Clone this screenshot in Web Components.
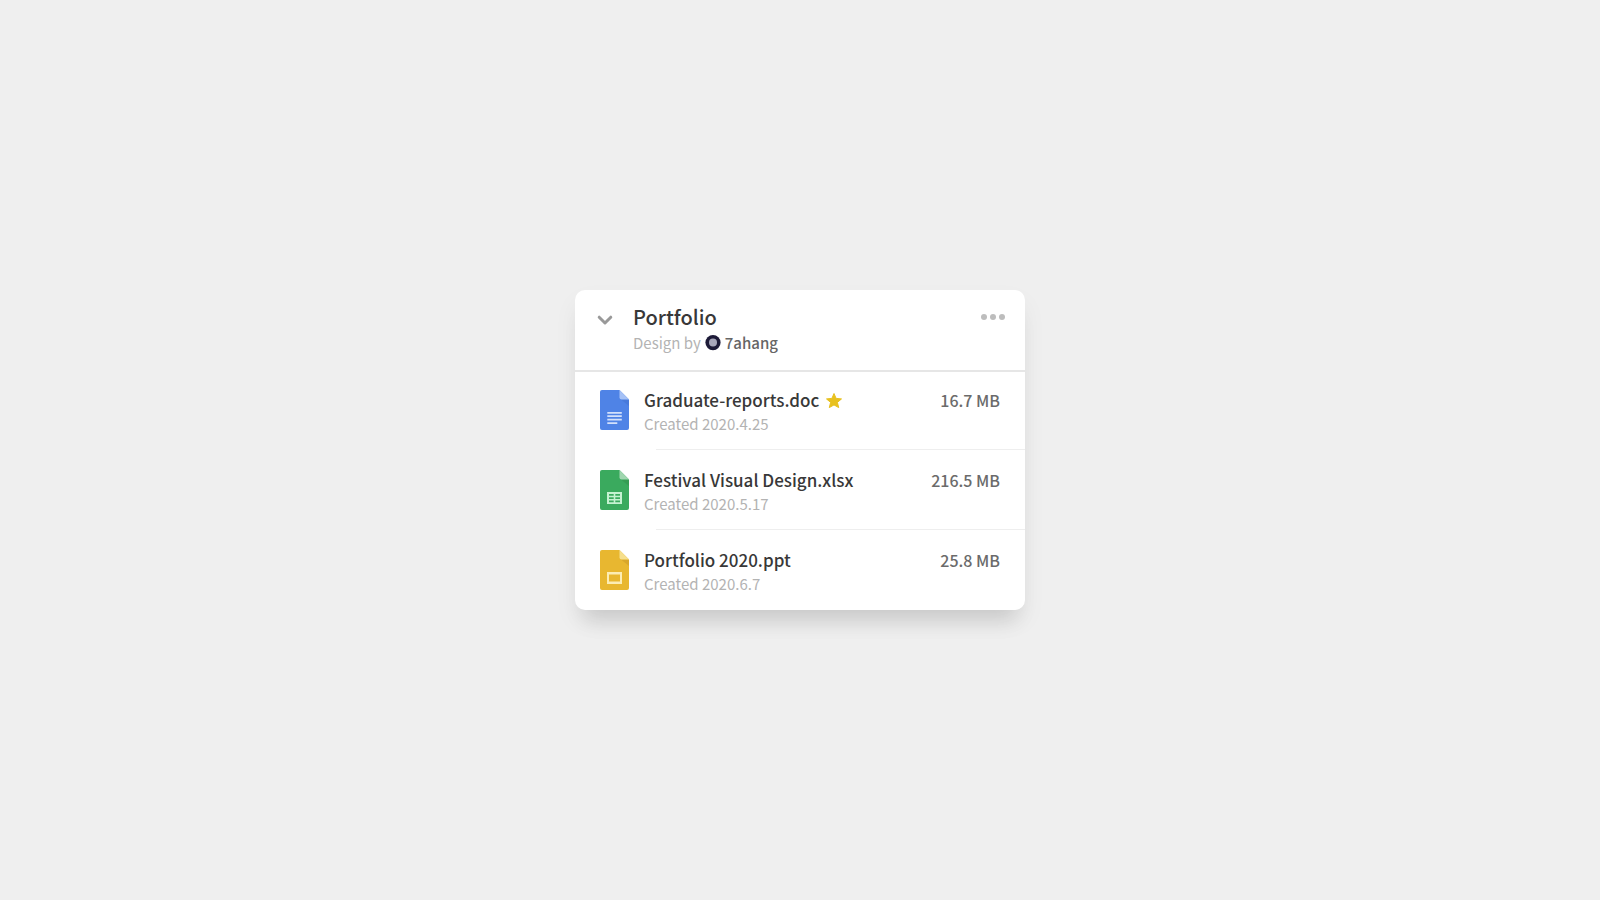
<!DOCTYPE html>
<html lang="en">
<head>
<meta charset="utf-8">
<title>Portfolio</title>
<style>
body {
  margin: 0;
  min-height: 100vh;
  display: grid;
  place-items: center;
  background: #efefef;
  color: #383838;
  font-family: "Noto Sans CJK SC", "Noto Sans", sans-serif;
}
</style>
</head>
<body>
<folder-card>
  <folder-header slot="header" heading="Portfolio" author="7ahang"></folder-header>
  <file-row kind="doc" name="Graduate-reports.doc" created="2020.4.25" size="16.7 MB" starred></file-row>
  <file-row kind="sheet" name="Festival Visual Design.xlsx" created="2020.5.17" size="216.5 MB"></file-row>
  <file-row kind="slides" name="Portfolio 2020.ppt" created="2020.6.7" size="25.8 MB"></file-row>
</folder-card>

<script>
function mount(host, markup) {
  const template = document.createElement('template');
  template.innerHTML = markup;
  host.attachShadow({ mode: 'open' }).append(template.content.cloneNode(true));
}

class FolderCard extends HTMLElement {
  connectedCallback() {
    if (this.shadowRoot) return;
    mount(this, `
      <style>
        :host {
          display: block;
          width: 100%;
          max-width: 450px;
          border-radius: 10px;
          background: #ffffff;
          box-shadow: 0 20px 20px -10px rgba(0, 0, 0, .12), 0 12px 24px rgba(0, 0, 0, .05);
        }
        .files { border-top: 2px solid #e6e6e6; }
      </style>
      <slot name="header"></slot>
      <div class="files"><slot></slot></div>`);
  }
}

class FolderHeader extends HTMLElement {
  connectedCallback() {
    if (this.shadowRoot) return;
    mount(this, `
      <style>
        :host {
          display: flex;
          align-items: flex-start;
          box-sizing: border-box;
          height: 80px;
          padding: 13px 19px 0 20px;
        }
        button {
          display: block;
          padding: 0;
          border: 0;
          background: none;
          cursor: pointer;
        }
        svg { display: block; }
        .toggle { margin: 7px 18px 0 0; }
        .more { margin-top: 5px; }
        .text { flex: 1; }
        h1 {
          margin: 0;
          font-size: 20px;
          line-height: 28px;
          font-weight: 500;
        }
        p {
          display: flex;
          align-items: center;
          gap: 4px;
          margin: 0;
          font-size: 15px;
          line-height: 24px;
          color: #b3b3b3;
        }
        a {
          display: flex;
          align-items: center;
          gap: 4px;
          color: #666666;
          font-weight: 500;
          text-decoration: none;
        }
      </style>
      <button class="toggle" type="button" aria-label="Collapse folder">
        <svg width="20" height="20" viewBox="0 0 20 20" fill="none" stroke="#999999" stroke-width="3" stroke-linecap="round" stroke-linejoin="round"><path d="M4.2 7.2 10 13l5.800-5.800"/></svg>
      </button>
      <div class="text">
        <h1></h1>
        <p>Design by
          <a href="#author">
            <svg width="16" height="16" viewBox="0 0 16 16"><circle cx="8" cy="7.600" r="7.600" fill="#1d1b38"/><circle cx="8" cy="7.600" r="4" fill="#a8a8bb"/></svg>
            <span></span>
          </a>
        </p>
      </div>
      <button class="more" type="button" aria-label="More options">
        <svg width="26" height="18" viewBox="0 0 26 18" fill="#bdbdbd"><circle cx="4" cy="9" r="3"/><circle cx="13" cy="9" r="3"/><circle cx="22" cy="9" r="3"/></svg>
      </button>`);
    this.shadowRoot.querySelector('h1').textContent = this.getAttribute('heading');
    this.shadowRoot.querySelector('a span').textContent = this.getAttribute('author');
  }
}

const FILE_KINDS = {
  doc: {
    page: '#4f83e6', fold: '#a5c1f6', shade: '#4474d4',
    mark: '<path fill="#d3e1fb" d="M7.300 22h14.500v1.700H7.300zM7.300 25.300h14.500V27H7.300zM7.300 28.700h14.500v1.700H7.300zM7.300 32.200h10v1.700h-10z"/>'
  },
  sheet: {
    page: '#3aaa5e', fold: '#9fd6af', shade: '#32954f',
    mark: '<path fill="#c5f2d1" fill-rule="evenodd" d="M7 22h15v12H7zM9 24v1.800h4.700V24zM15.300 24v1.800H20V24zM9 27.200V29h4.700v-1.800zM15.300 27.200V29H20v-1.800zM9 30.400v1.800h4.700v-1.800zM15.300 30.400v1.800H20v-1.800z"/>'
  },
  slides: {
    page: '#e8b730', fold: '#f6df8c', shade: '#cd9d28',
    mark: '<path fill="#fcedb4" fill-rule="evenodd" d="M7 22h15v12H7zM9 24.500v7h11v-7z"/>'
  }
};

class FileIcon extends HTMLElement {
  connectedCallback() {
    if (this.shadowRoot) return;
    const kind = FILE_KINDS[this.getAttribute('kind')];
    mount(this, `
      <style>
        :host { display: block; }
        svg { display: block; }
      </style>
      <svg width="29" height="40" viewBox="0 0 29 40" aria-hidden="true">
        <path fill="${kind.page}" d="M2 0h17.500L29 9.500V38a2 2 0 0 1-2 2H2a2 2 0 0 1-2-2V2a2 2 0 0 1 2-2z"/>
        <path fill="${kind.shade}" d="M21 9.500h8V16z" opacity=".6"/>
        <path fill="${kind.fold}" d="M19.500 0 29 9.500h-7.500a2 2 0 0 1-2-2z"/>
        ${kind.mark}
      </svg>`);
  }
}

class FileRow extends HTMLElement {
  connectedCallback() {
    if (this.shadowRoot) return;
    mount(this, `
      <style>
        :host {
          display: grid;
          grid-template-columns: auto 1fr auto;
          column-gap: 15px;
          align-items: start;
          box-sizing: border-box;
          height: 80px;
          padding: 18px 25px 0;
          background: linear-gradient(#eeeeee, #eeeeee) 81px 77px / 100% 1px no-repeat;
        }
        :host(:last-of-type) { height: 78px; background: none; }
        h2 {
          display: flex;
          align-items: center;
          gap: 6px;
          margin: -2px 0 0;
          font-size: 17px;
          line-height: 24px;
          font-weight: 500;
        }
        p {
          margin: 0;
          font-size: 15px;
          line-height: 24px;
          color: #b3b3b3;
        }
        .size {
          margin-top: -2px;
          font-size: 16px;
          line-height: 24px;
          font-weight: 500;
          color: #6b6b6b;
        }
        svg { display: none; }
        :host([starred]) svg { display: block; }
      </style>
      <file-icon kind="${this.getAttribute('kind')}"></file-icon>
      <div>
        <h2><span class="name"></span>
          <svg width="18" height="18" viewBox="0 0 18 18" role="img" aria-label="Starred"><path fill="#e8c11f" stroke="#e8c11f" stroke-linejoin="round" d="m9 2.500 2.100 4.900 5.400.500-4.100 3.500 1.300 5.200L9 13.900l-4.700 2.700 1.300-5.200-4.100-3.500 5.400-.500z"/></svg>
        </h2>
        <p></p>
      </div>
      <span class="size"></span>`);
    const root = this.shadowRoot;
    root.querySelector('.name').textContent = this.getAttribute('name');
    root.querySelector('p').textContent = 'Created ' + this.getAttribute('created');
    root.querySelector('.size').textContent = this.getAttribute('size');
  }
}

customElements.define('file-icon', FileIcon);
customElements.define('file-row', FileRow);
customElements.define('folder-header', FolderHeader);
customElements.define('folder-card', FolderCard);
</script>
</body>
</html>
